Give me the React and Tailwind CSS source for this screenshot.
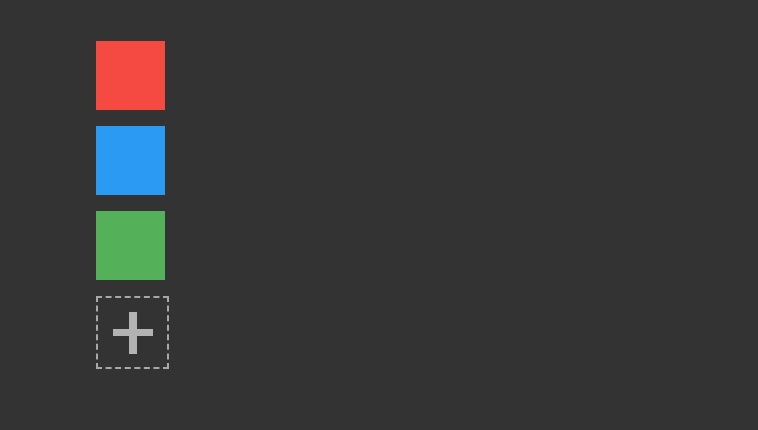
import React from 'react';

const swatches = ['bg-[#f54a41]', 'bg-[#2a9af3]', 'bg-[#54b159]'];

const App = () => {
  return (
    <div className="w-[758px] h-[430px] bg-[#333333] pl-[96px] pt-[41px]">
      <div className="flex flex-col gap-[16px]">
        {swatches.map((c) => (
          <div key={c} className={`w-[69px] h-[69px] ${c}`} />
        ))}
        <button className="w-[73px] h-[73px] border-2 border-dashed border-[#a8a8a8] flex items-center justify-center">
          <svg width="40" height="42" viewBox="0 0 40 42">
            <rect x="0" y="17" width="40" height="7" fill="#b3b3b3" />
            <rect x="16" y="0" width="8" height="42" fill="#b3b3b3" />
          </svg>
        </button>
      </div>
    </div>
  );
};

export default App;
